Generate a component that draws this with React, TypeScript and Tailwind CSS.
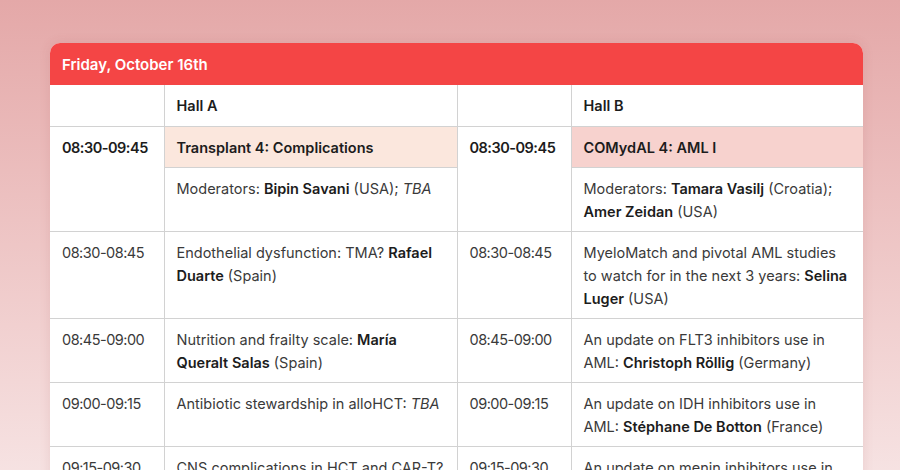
import React from 'react';

type Talk = {
    timeA: string;
    a: React.ReactNode;
    timeB: string;
    b: React.ReactNode;
};

const B = ({ children }: { children: React.ReactNode }) => (
    <span className="font-semibold text-[#1c1c1c]">{children}</span>
);

const talks: Talk[] = [
    {
        timeA: '08:30-08:45',
        a: (
            <>
                Endothelial dysfunction: TMA? <B>Rafael Duarte</B> (Spain)
            </>
        ),
        timeB: '08:30-08:45',
        b: (
            <>
                MyeloMatch and pivotal AML studies to watch for in the next 3 years: <B>Selina Luger</B> (USA)
            </>
        ),
    },
    {
        timeA: '08:45-09:00',
        a: (
            <>
                Nutrition and frailty scale: <B>María Queralt Salas</B> (Spain)
            </>
        ),
        timeB: '08:45-09:00',
        b: (
            <>
                An update on FLT3 inhibitors use in AML: <B>Christoph Röllig</B> (Germany)
            </>
        ),
    },
    {
        timeA: '09:00-09:15',
        a: (
            <>
                Antibiotic stewardship in alloHCT: <i>TBA</i>
            </>
        ),
        timeB: '09:00-09:15',
        b: (
            <>
                An update on IDH inhibitors use in AML: <B>Stéphane De Botton</B> (France)
            </>
        ),
    },
    {
        timeA: '09:15-09:30',
        a: (
            <>
                CNS complications in HCT and CAR-T? <B>Anna Sureda</B> (Spain)
            </>
        ),
        timeB: '09:15-09:30',
        b: (
            <>
                An update on menin inhibitors use in AML: <B>Eytan Stein</B> (USA)
            </>
        ),
    },
];

const cell = 'border border-[#d2d2d2] px-3 pt-[9px] pb-[8px] align-top';
const time = 'whitespace-nowrap tracking-[-0.5px]';

export default function App() {
    return (
        <div
            className="h-[470px] w-[900px] overflow-hidden bg-gradient-to-b from-[#e4a8a8] to-[#f6e2e2] pt-[43px] pl-[50px] text-[14.5px] leading-[23px] text-[#3a3a3a]"
            style={{ fontFamily: 'Inter, "Noto Sans", sans-serif' }}
        >
            <div className="w-[813px] overflow-hidden rounded-t-[10px] bg-white shadow-[0_0_12px_rgba(150,60,60,0.12)]">
                <div className="flex h-[42px] items-center bg-[#f44545] px-3 text-[15px] font-semibold text-white">
                    Friday, October 16th
                </div>
                <table className="w-full table-fixed border-collapse">
                    <colgroup>
                        <col className="w-[114px]" />
                        <col className="w-[293px]" />
                        <col className="w-[114px]" />
                        <col className="w-[292px]" />
                    </colgroup>
                    <tbody>
                        <tr>
                            <td className={`${cell} border-t-0 border-l-0 pb-[9px]`} />
                            <td className={`${cell} border-t-0 pb-[9px] font-semibold text-[#1c1c1c]`}>Hall A</td>
                            <td className={`${cell} border-t-0 pb-[9px]`} />
                            <td className={`${cell} border-t-0 border-r-0 pb-[9px] font-semibold text-[#1c1c1c]`}>
                                Hall B
                            </td>
                        </tr>
                        <tr>
                            <td
                                rowSpan={2}
                                className={`${cell} ${time} border-l-0 font-semibold text-[#1c1c1c]`}
                            >
                                08:30-09:45
                            </td>
                            <td className={`${cell} pb-[7px] bg-[#fbe7dd] font-semibold text-[#1c1c1c]`}>
                                Transplant 4: Complications
                            </td>
                            <td rowSpan={2} className={`${cell} ${time} font-semibold text-[#1c1c1c]`}>
                                08:30-09:45
                            </td>
                            <td className={`${cell} pb-[7px] border-r-0 bg-[#f7d2ce] font-semibold text-[#1c1c1c]`}>
                                COMydAL 4: AML I
                            </td>
                        </tr>
                        <tr>
                            <td className={cell}>
                                Moderators: <B>Bipin Savani</B> (USA); <i>TBA</i>
                            </td>
                            <td className={`${cell} border-r-0`}>
                                Moderators: <B>Tamara Vasilj</B> (Croatia); <B>Amer Zeidan</B> (USA)
                            </td>
                        </tr>
                        {talks.map((t) => (
                            <tr key={t.timeA}>
                                <td className={`${cell} ${time} border-l-0`}>{t.timeA}</td>
                                <td className={cell}>{t.a}</td>
                                <td className={`${cell} ${time}`}>{t.timeB}</td>
                                <td className={`${cell} border-r-0`}>{t.b}</td>
                            </tr>
                        ))}
                    </tbody>
                </table>
            </div>
        </div>
    );
}
